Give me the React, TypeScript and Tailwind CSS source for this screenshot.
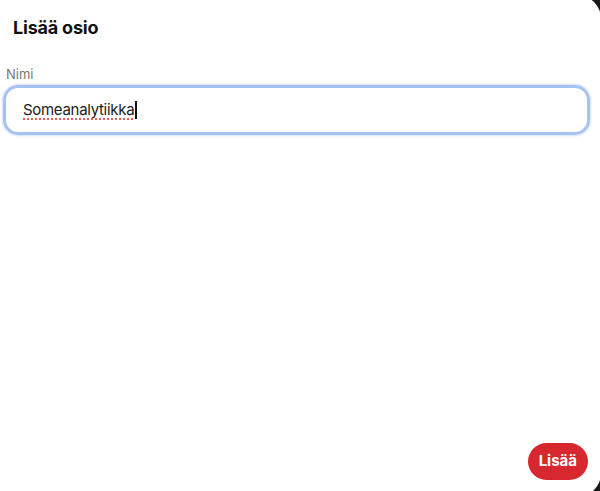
import React from "react";

export default function App() {
  return (
    <div className="h-[491px] w-[600px] overflow-hidden bg-[#1a1a1a]" style={{ fontFamily: "Inter, 'Noto Sans', sans-serif" }}>
      <div className="-mt-[5px] -ml-[15px] flex h-[502px] w-[616px] flex-col rounded-[24px] bg-white pl-[15px] pt-[5px]">
        <h1 className="ml-[13px] mt-[15px] text-[18px] font-bold leading-[26px] tracking-[-0.2px] text-[#111]">Lisää osio</h1>
        <div className="ml-[6px] mt-[25px] text-[13px] leading-[16px] text-[#777]">Nimi</div>
        <div className="ml-[3px] mt-[3px] flex h-[50px] w-[587px] items-center rounded-[15px] border-[3px] border-[#a6c2f1] pl-[17px] shadow-[0_0_2px_1px_#d3e1f8]">
          <span className="text-[15px] leading-[20px] tracking-[-0.3px] text-[#1a1a1a] underline decoration-[#e06060] decoration-dotted decoration-[1.5px] underline-offset-[3px]">Someanalytiikka</span>
          <span className="ml-[1px] h-[18px] w-[1.5px] bg-[#111]" />
        </div>
        <div className="flex-1" />
        <div className="mb-[17px] mr-[13px] flex justify-end">
          <button className="h-[37px] rounded-full bg-[#d6282e] px-[11px] text-[15px] font-bold text-white">Lisää</button>
        </div>
      </div>
    </div>
  );
}
